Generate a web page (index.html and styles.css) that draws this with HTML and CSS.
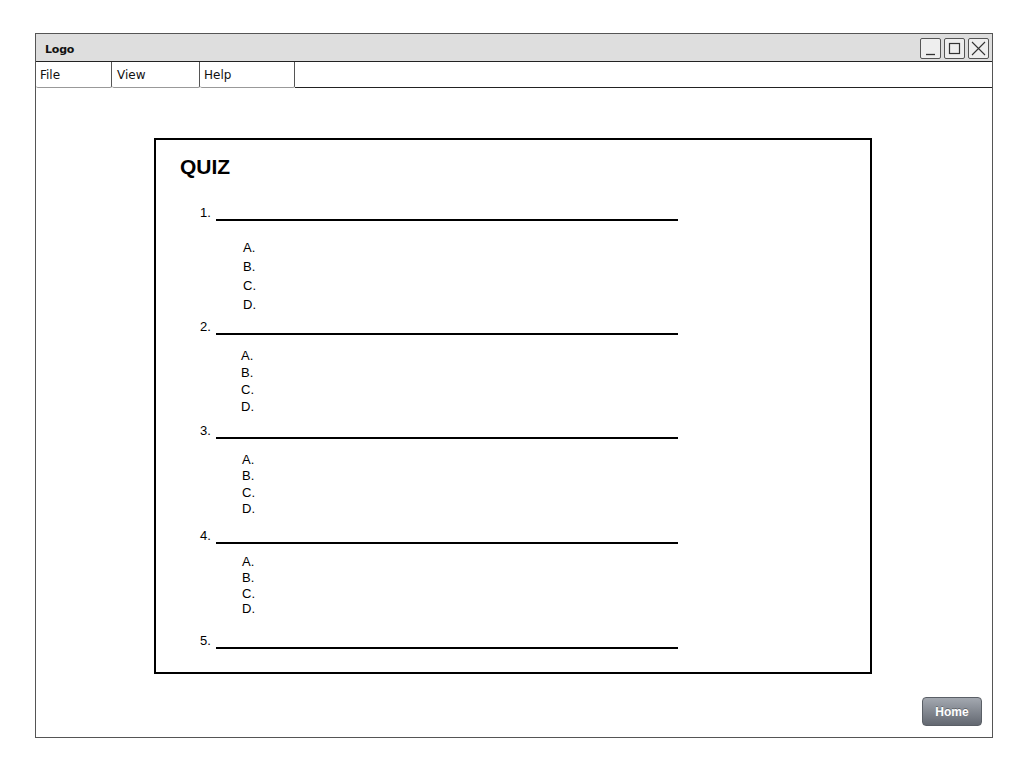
FILE: index.html
```html
<!DOCTYPE html>
<html>
<head>
<meta charset="utf-8">
<link rel="stylesheet" href="styles.css">
</head>
<body>
<div class="window">
  <div class="titlebar">
    <span class="logo">Logo</span>
    <div class="controls">
      <span class="ctl"><svg width="19" height="19" viewBox="0 0 19 19"><path d="M5 15.5h9" stroke="#333" stroke-width="1.3" fill="none"/></svg></span>
      <span class="ctl"><svg width="19" height="19" viewBox="0 0 19 19"><rect x="4.5" y="4.5" width="10" height="10" stroke="#333" stroke-width="1.2" fill="none"/></svg></span>
      <span class="ctl"><svg width="19" height="19" viewBox="0 0 19 19"><path d="M3 3L16 16M16 3L3 16" stroke="#333" stroke-width="1.1" fill="none"/></svg></span>
    </div>
  </div>
  <div class="menubar">
    <span class="menu m-file">File</span>
    <span class="menu m-view">View</span>
    <span class="menu m-help">Help</span>
    <span class="menu-rest"></span>
  </div>
  <div class="content">
    <div class="quiz">
      <h1 class="quiz-title">QUIZ</h1>
      <div class="q q1"><span class="num">1.</span><span class="blank"></span></div>
      <ol class="opts o1"><li>A.</li><li>B.</li><li>C.</li><li>D.</li></ol>
      <div class="q q2"><span class="num">2.</span><span class="blank"></span></div>
      <ol class="opts o2"><li>A.</li><li>B.</li><li>C.</li><li>D.</li></ol>
      <div class="q q3"><span class="num">3.</span><span class="blank"></span></div>
      <ol class="opts o3"><li>A.</li><li>B.</li><li>C.</li><li>D.</li></ol>
      <div class="q q4"><span class="num">4.</span><span class="blank"></span></div>
      <ol class="opts o4"><li>A.</li><li>B.</li><li>C.</li><li>D.</li></ol>
      <div class="q q5"><span class="num">5.</span><span class="blank"></span></div>
    </div>
    <div class="footer">
      <button class="home">Home</button>
    </div>
  </div>
</div>
</body>
</html>
```

FILE: styles.css
```css
html, body {
  margin: 0;
  padding: 0;
  background: #fff;
}
body {
  padding: 33px 0 0 35px;
  font-family: "Liberation Sans", Arial, sans-serif;
}
.window {
  width: 956px;
  height: 703px;
  border: 1px solid #555;
  display: flex;
  flex-direction: column;
}
.titlebar {
  height: 27px;
  background: #dedede;
  border-bottom: 1px solid #222;
  display: flex;
  align-items: center;
  justify-content: space-between;
  padding: 0 3px 0 9px;
}
.logo {
  font-family: "DejaVu Sans", sans-serif;
  font-weight: bold;
  font-size: 11px;
  color: #111;
  letter-spacing: -0.2px;
  padding-top: 3px;
}
.controls {
  display: flex;
  gap: 3px;
  margin-top: 1px;
}
.ctl {
  width: 19px;
  height: 19px;
  border: 1px solid #555;
  border-radius: 2px;
  background: #eee;
  display: block;
}
.ctl svg {
  display: block;
}
.menubar {
  height: 26px;
  display: flex;
  font-family: "DejaVu Sans", sans-serif;
  font-size: 12px;
  color: #111;
}
.menu {
  border-right: 1px solid #555;
  border-bottom: 1px solid #999;
  border-radius: 0 0 2px 2px;
  padding: 6px 0 0 4px;
  box-sizing: border-box;
}
.m-file { width: 76px; }
.m-view { width: 88px; padding-left: 5px; }
.m-help { width: 95px; padding-left: 4px; }
.menu-rest {
  flex: 1;
  border-bottom: 1px solid #222;
}
.content {
  flex: 1;
  display: flex;
  flex-direction: column;
}
.quiz {
  margin: 50px 0 0 118px;
  width: 690px;
  height: 518px;
  border: 2px solid #000;
  padding: 14px 0 0 24px;
  box-sizing: content-box;
}
.quiz-title {
  margin: 0;
  font-size: 21px;
  font-weight: bold;
  line-height: 26px;
  color: #000;
}
.q {
  display: flex;
  align-items: flex-end;
  height: 16px;
  margin-left: 20px;
  font-size: 13px;
}
.num {
  width: 16px;
  line-height: 16px;
}
.blank {
  width: 462px;
  height: 2px;
  background: #000;
}
.q1 { margin-top: 25px; }
.q2 { margin-top: 5px; }
.q3 { margin-top: 8px; }
.q4 { margin-top: 11px; }
.q5 { margin-top: 16px; }
.opts {
  list-style: none;
  margin: 0;
  padding: 0 0 0 62px;
  font-size: 13px;
}
.o1 { margin-top: 17px; line-height: 19px; padding-left: 63px; }
.o2 { margin-top: 12px; line-height: 17px; padding-left: 61px; }
.o3 { margin-top: 13px; line-height: 16.3px; }
.o4 { margin-top: 10px; line-height: 15.7px; }
.footer {
  display: flex;
  justify-content: flex-end;
  padding: 23px 10px 0 0;
}
.home {
  width: 60px;
  height: 29px;
  border: 1px solid #5a5f66;
  border-radius: 4px;
  background: linear-gradient(#a3a8b0, #636871);
  color: #fff;
  font-family: "Liberation Sans", Arial, sans-serif;
  font-weight: bold;
  font-size: 12px;
  text-shadow: 0 -1px 0 rgba(0,0,0,0.3);
  padding: 0;
}
```
